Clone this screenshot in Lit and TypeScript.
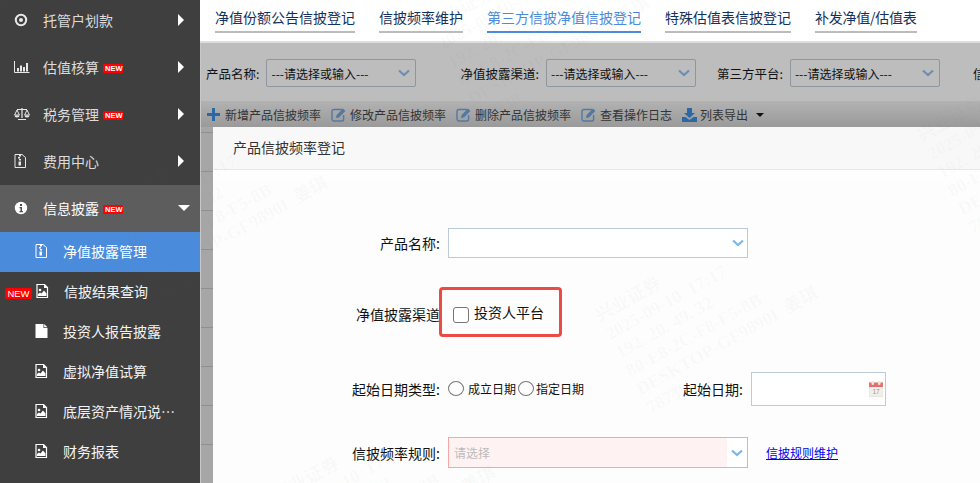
import { LitElement, html, css, svg } from "lit";
import { customElement } from "lit/decorators.js";

const arrowDown = html`<svg class="chev" viewBox="0 0 12 8" width="12" height="8"><path d="M1 1.5 L6 6 L11 1.5" fill="none" stroke="currentColor" stroke-width="2.2"/></svg>`;

const icons: Record<string, any> = {
  target: svg`<circle cx="7" cy="7" r="5.2" fill="none" stroke="#e8e8e8" stroke-width="2"/><circle cx="7" cy="7" r="2" fill="#e8e8e8"/>`,
  chart: svg`<path d="M0.5 1V12.5H15.5" fill="none" stroke="#e8e8e8" stroke-width="1"/><path d="M3 8h2v3.5H3zM6 5.5h2v6H6zM9 7h2v4.5H9zM12 3h2v8.5h-2z" fill="#e8e8e8"/>`,
  scale: svg`<path d="M8 1v10M4 12.5h8M3 2.5h10" stroke="#e8e8e8" stroke-width="1.2" fill="none"/><path d="M3 3L0.6 8h4.8zM13 3l-2.4 5h4.8z" fill="none" stroke="#e8e8e8"/><path d="M0.5 8.5a2.5 2 0 0 0 5 0zM10.5 8.5a2.5 2 0 0 0 5 0z" fill="#e8e8e8"/>`,
  zip: svg`<path d="M1 .5h7l3.5 3v10H1z" fill="none" stroke="#e8e8e8"/><path d="M5 1h2v1.5H5zM4 3h2v1.5H4zM5 5h2v1.5H5zM4.5 7.5h2.5v4H4.5z" fill="#e8e8e8"/>`,
  info: svg`<circle cx="7" cy="7" r="6.2" fill="#fff"/><path d="M6 3h2v2H6zM5.5 6h2.5v4h1v1.2H5.5V10h1V7.2h-1z" fill="#4d4d4d"/>`,
  zipw: svg`<path d="M1 .5h7l3.5 3v10H1z" fill="none" stroke="#fff"/><path d="M5 1h2v1.5H5zM4 3h2v1.5H4zM5 5h2v1.5H5zM4.5 7.5h2.5v4H4.5z" fill="#fff"/>`,
  pic: svg`<path d="M1 .5h7.5l3 3v10H1z" fill="none" stroke="#fff" stroke-width="1.2"/><circle cx="4" cy="6" r="1.3" fill="#fff"/><path d="M2 12v-2l2-1.5 1.5 1 2.5-3 2.5 3V12z" fill="#fff"/><path d="M8 .5v3.5h3.5" fill="#fff"/>`,
  file: svg`<path d="M.5 0h8v4h4v10H.5z" fill="#fff"/><path d="M9.2 0l3.3 3.3H9.2z" fill="#fff"/>`,
};

const icon = (n: string, w = 16, h = 14) =>
  html`<svg class="ico" width=${w} height=${h} viewBox="0 0 ${w} ${h}">${icons[n]}</svg>`;

const editIcon = html`<svg class="tico" width="16" height="15" viewBox="0 0 16 15"><path d="M11 2.5H2.8A1.8 1.8 0 0 0 1 4.3v8A1.8 1.8 0 0 0 2.8 14h8a1.8 1.8 0 0 0 1.8-1.8V8" fill="none" stroke="#5379a3" stroke-width="1.4"/><path d="M5 11l.6-3L12 1.5l2.4 2.4L8 10.4z" fill="#5379a3"/></svg>`;
const plusIcon = html`<svg class="tico" width="13" height="13" viewBox="0 0 13 13"><path d="M5 0h3v5h5v3H8v5H5V8H0V5h5z" fill="#2c68a6"/></svg>`;
const dlIcon = html`<svg class="tico" width="15" height="14" viewBox="0 0 15 14"><path d="M5 0h5v5h3l-5.5 5L2 5h3z" fill="#2c68a6"/><path d="M0 9h3.5l4 3 4-3H15v5H0z" fill="#2c68a6"/></svg>`;

const calIcon = html`<svg width="14" height="16" viewBox="0 0 14 16"><rect x="0" y="2" width="14" height="13.5" fill="#f1efe9" stroke="#d8d4c8" stroke-width=".5"/><rect x="0" y="1.5" width="14" height="4.5" fill="#e27070"/><rect x="2.5" y="0" width="2.5" height="4" rx="1" fill="#e9e4dc"/><rect x="9" y="0" width="2.5" height="4" rx="1" fill="#e9e4dc"/><text x="7" y="13" text-anchor="middle" font-size="6.5" font-family="Liberation Sans, sans-serif" fill="#9a9a9a">17</text></svg>`;

const WM = ["兴业证券", "2025-09-10  17:17", "192. 20. 49. 32", "80-E8-2C-F8-F5-8B", "DESKTOP-GF9890I  姜琪", "78738"];
const marks: [number, number][] = [
  [592, 308], [914, 128], [424, 18], [270, 488], [102, 198], [-66, -92],
];

@customElement("app-root")
export class AppRoot extends LitElement {
  static styles = css`
    :host { display: block; width: 980px; height: 483px; overflow: hidden; position: relative; font-family: "Noto Sans CJK SC", "Liberation Sans", sans-serif; background: #fff; }
    .page { display: flex; height: 483px; }
    .side { width: 200px; flex: none; background: #3f3f3f; color: #dcdcdc; font-size: 14px; display: flex; flex-direction: column; }
    .m { height: 47px; flex: none; display: flex; align-items: center; padding: 0 16px 1px 14px; box-sizing: border-box; }
    .m.first { height: 44px; padding-bottom: 4px; }
    .m .ico { flex: none; margin-right: 13px; width: 16px; }
    .m .t { line-height: 20px; }
    .badge { background: #f00; color: #fff; font: bold 7.5px/9px "Liberation Sans", sans-serif; padding: 0 2px; margin-left: 4px; border-radius: 1px; height: 9px; width: 16px; text-align: center; transform: translateY(1px); }
    .m .caret { margin-left: auto; width: 0; height: 0; border-left: 6px solid #fff; border-top: 6px solid transparent; border-bottom: 6px solid transparent; }
    .m.open { background: #5d5d5d; color: #fff; }
    .m.open .caret { border: 0; border-top: 6px solid #fff; border-left: 6px solid transparent; border-right: 6px solid transparent; margin-right: -6px; }
    .s { height: 40px; flex: none; display: flex; align-items: center; padding: 0 0 2px 35px; box-sizing: border-box; color: #f4f4f4; font-size: 14px; position: relative; }
    .s .ico { flex: none; margin-right: 15px; width: 13px; }
    .s.on { background: #4a8bdc; color: #fff; }
    .s .new { position: absolute; left: 5px; top: 16px; background: #f00; color: #fff; font: 9.5px/11px "Liberation Sans", sans-serif; width: 27px; text-align: center; border-radius: 2px; }
    .s.shift { padding-left: 36px; }

    .main { flex: 1; min-width: 0; display: flex; flex-direction: column; background: #c8c8c8; }
    .tabs { flex: none; background: #fff; display: flex; gap: 24px; padding: 0 0 0 15px; box-sizing: border-box; border-bottom: 2px solid #dedede; height: 43px; }
    .tab { height: 31px; font-size: 14px; color: #13315c; line-height: 35px; box-sizing: content-box; border-bottom: 2px solid #bcbcbc; white-space: nowrap; }
    .tab.on { color: #4a8bdc; border-bottom-color: #4a8bdc; }
    .tab.tight { letter-spacing: -0.25px; }
    .body { flex: 1; display: flex; flex-direction: column; min-height: 0; margin-left: 1px; }
    .filters { height: 58px; flex: none; background: #bdbdbd; display: flex; align-items: center; font-size: 12.5px; color: #111; padding: 2px 0 0 5px; box-sizing: border-box; white-space: nowrap; overflow: hidden; }
    .f { display: flex; align-items: center; gap: 7px; flex: none; }
    .sel { width: 150px; height: 28px; border: 1px solid #8e96a0; border-radius: 2px; box-sizing: border-box; display: flex; align-items: center; padding: 0 4px; font-size: 12px; justify-content: space-between; color: #111; }
    .sel .chev { color: #6e8cb4; margin-right: 1px; }
    .tools { height: 26px; flex: none; background: linear-gradient(#b2b2b2, #9a9a9a); display: flex; align-items: center; font-size: 12px; color: #333; padding-left: 6px; gap: 10px; white-space: nowrap; padding-top: 1px; box-sizing: border-box; }
    .tool { display: flex; align-items: center; gap: 3px; }
    .tool .first { margin-left: 2px; }
    .tri { width: 0; height: 0; border-top: 4px solid #111; border-left: 4px solid transparent; border-right: 4px solid transparent; margin-left: -2px; }
    .low { flex: 1; display: flex; min-height: 0; }
    .strip { width: 12px; flex: none; background: linear-gradient(#a6a6a6 0 38px, #8f8f8f 38px 39px) 0 6px / 100% 39px repeat-y, #a6a6a6; }
    .modal { flex: 1; background: #fdfdfd; display: flex; flex-direction: column; min-width: 0; color: #111; }
    .mh { height: 43px; flex: none; background: #f8f8f8; border-bottom: 1px solid #e8e8e8; box-sizing: border-box; font-size: 14px; color: #333; display: flex; align-items: center; padding: 0 0 2px 20px; }
    .form { display: flex; flex-direction: column; padding-top: 58px; flex: 1; background: linear-gradient(#fff, #fdfdfd 15px); }
    .row { display: flex; align-items: center; }
    .lab { width: 227px; text-align: right; font-size: 14px; flex: none; }
    .box { border: 1px solid #bccbdb; box-sizing: border-box; background: #fff; display: flex; align-items: center; justify-content: space-between; }
    .r1 { height: 30px; }
    .r1 .box { width: 300px; height: 30px; margin-left: 8px; padding-right: 2px; color: #7ab7ea; }
    .r1 .chev { margin-right: 1px; }
    .r2 { margin-top: 29px; height: 50px; }
    .red { margin-left: -1px; width: 123px; height: 50px; border: 3px solid #ea4c43; border-radius: 4px; box-sizing: border-box; display: flex; align-items: center; padding-left: 11px; font-size: 14px; gap: 5px; }
    .cb { width: 16px; height: 16px; border: 1px solid #767676; border-radius: 3px; box-sizing: border-box; background: #fff; margin-top: 5px; }
    .r2 .lab { margin-top: 3px; }
    .r3 { margin-top: 35px; height: 34px; font-size: 14px; }
    .radio { width: 16px; height: 15px; border: 1px solid #767676; border-radius: 50%; box-sizing: border-box; background: #fff; flex: none; }
    .rg { display: flex; align-items: center; font-size: 12px; margin-left: 8px; width: 300px; flex: none; transform: translateY(-1px); }
    .rg .radio { margin-top: 1px; }
    .gap1 { margin: 0 2px 0 4px; }
    .gap2 { margin-left: 2px; }
    .date { display: flex; align-items: center; }
    .date .box { width: 135px; height: 34px; margin-left: 8px; justify-content: flex-end; padding-right: 2px; }
    .r3 .dlab { margin-left: -65px; width: 60px; text-align: right; flex: none; }
    .r4 { margin-top: 31px; height: 31px; }
    .pk { width: 300px; height: 31px; margin-left: 8px; border: 1px solid #f7a5a5; box-sizing: border-box; display: flex; align-items: center; color: #bbb; font-size: 12px; background: #fff; flex: none; }
    .pk .v { flex: 1; background: #fff2f2; height: 100%; display: flex; align-items: center; padding-left: 5px; }
    .pk .chev { color: #7ab7ea; margin: 0 4px; }
    .link { margin-left: 18px; font-size: 12px; color: #0000ee; text-decoration: underline; }

    .wm { position: absolute; transform: rotate(-29deg); transform-origin: 0 0; font: bold 18px/21px "Liberation Serif", "Noto Sans CJK SC", serif; color: rgba(120,120,120,.04); pointer-events: none; white-space: pre; }
  `;

  render() {
    const menu = (ic: string, t: string, badge = false, cls = "") => html`
      <div class="m ${cls}">${icon(ic)}<span class="t">${t}</span>${badge ? html`<span class="badge">NEW</span>` : ""}<span class="caret"></span></div>`;
    const sub = (ic: string, t: string, cls = "", nw = false) => html`
      <div class="s ${cls}">${nw ? html`<span class="new">NEW</span>` : ""}${icon(ic, 13, 14)}<span>${t}</span></div>`;
    const sel = (label: string, ml: number) => html`
      <div class="f" style="margin-left:${ml}px"><span>${label}</span><div class="sel"><span>---请选择或输入---</span>${arrowDown}</div></div>`;
    return html`
      <div class="page">
        <nav class="side">
          ${menu("target", "托管户划款", false, "first")}
          ${menu("chart", "估值核算", true)}
          ${menu("scale", "税务管理", true)}
          ${menu("zip", "费用中心")}
          ${menu("info", "信息披露", true, "open")}
          ${sub("zipw", "净值披露管理", "on")}
          ${sub("pic", "信披结果查询", "shift", true)}
          ${sub("file", "投资人报告披露")}
          ${sub("pic", "虚拟净值试算")}
          ${sub("pic", "底层资产情况说…")}
          ${sub("pic", "财务报表")}
        </nav>
        <div class="main">
          <div class="tabs">
            <div class="tab">净值份额公告信披登记</div>
            <div class="tab">信披频率维护</div>
            <div class="tab on">第三方信披净值信披登记</div>
            <div class="tab">特殊估值表信披登记</div>
            <div class="tab tight">补发净值/估值表</div>
          </div>
          <div class="body">
            <div class="filters">
              ${sel("产品名称:", 0)}
              ${sel("净值披露渠道:", 44)}
              ${sel("第三方平台:", 21)}
              ${sel("信披", 33)}
            </div>
            <div class="tools">
              <div class="tool">${plusIcon}<span class="first">新增产品信披频率</span></div>
              <div class="tool">${editIcon}<span>修改产品信披频率</span></div>
              <div class="tool">${editIcon}<span>删除产品信披频率</span></div>
              <div class="tool">${editIcon}<span>查看操作日志</span></div>
              <div class="tool">${dlIcon}<span>列表导出</span></div>
              <div class="tri"></div>
            </div>
            <div class="low">
              <div class="strip"></div>
              <div class="modal">
                <div class="mh">产品信披频率登记</div>
                <div class="form">
                  <div class="row r1"><span class="lab">产品名称:</span><div class="box"><span></span>${arrowDown}</div></div>
                  <div class="row r2"><span class="lab">净值披露渠道</span><div class="red"><span class="cb"></span><span>投资人平台</span></div></div>
                  <div class="row r3">
                    <span class="lab">起始日期类型:</span>
                    <div class="rg"><span class="radio"></span><span class="gap1">成立日期</span><span class="radio"></span><span class="gap2">指定日期</span></div>
                    <span class="dlab">起始日期:</span>
                    <div class="date"><div class="box">${calIcon}</div></div>
                  </div>
                  <div class="row r4">
                    <span class="lab">信披频率规则:</span>
                    <div class="pk"><div class="v">请选择</div>${arrowDown}</div>
                    <span class="link">信披规则维护</span>
                  </div>
                </div>
              </div>
            </div>
          </div>
        </div>
      </div>
      ${marks.map(([x, y]) => html`<div class="wm" style="left:${x}px;top:${y}px">${WM.join("\n")}</div>`)}
    `;
  }
}
